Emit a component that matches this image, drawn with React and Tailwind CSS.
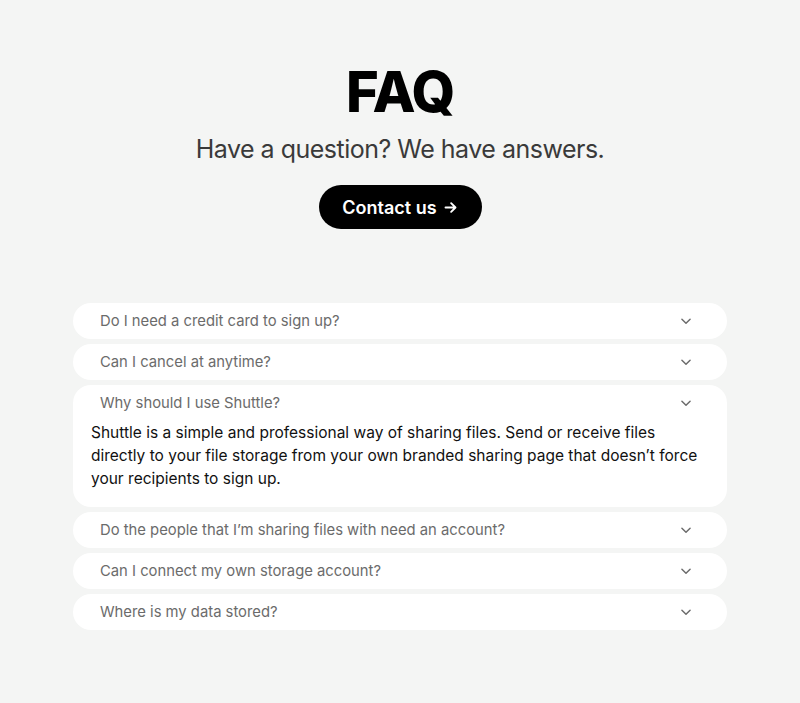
import { useState } from 'react';

const faqs = [
  { q: 'Do I need a credit card to sign up?', a: '' },
  { q: 'Can I cancel at anytime?', a: '' },
  {
    q: 'Why should I use Shuttle?',
    a: 'Shuttle is a simple and professional way of sharing files. Send or receive files directly to your file storage from your own branded sharing page that doesn\u2019t force your recipients to sign up.',
  },
  { q: 'Do the people that I\u2019m sharing files with need an account?', a: '' },
  { q: 'Can I connect my own storage account?', a: '' },
  { q: 'Where is my data stored?', a: '' },
];

function Chevron() {
  return (
    <svg width="14" height="14" viewBox="0 0 24 24" fill="none" stroke="#6b6b6b" strokeWidth="2.5" strokeLinecap="round" strokeLinejoin="round">
      <path d="M5 9l7 7 7-7" />
    </svg>
  );
}

export default function App() {
  const [open, setOpen] = useState(2);

  return (
    <div className="min-h-[703px] bg-[#f4f5f4] font-['Inter',sans-serif] pt-[61px]">
      {/* Header */}
      <div className="flex flex-col items-center">
        <h1 className="text-[56px] leading-[62px] font-extrabold tracking-tight text-black">FAQ</h1>
        <p className="mt-[10px] text-[25px] leading-[32px] tracking-[-0.02em] text-[#3a3a3a]">
          Have a question? We have answers.
        </p>
        <button className="mt-[20px] h-[44px] w-[163px] rounded-full bg-black text-white text-[18px] font-semibold flex items-center justify-center gap-1.5">
          Contact us
          <svg width="15" height="15" viewBox="0 0 24 24" fill="none" stroke="white" strokeWidth="3" strokeLinecap="round" strokeLinejoin="round">
            <path d="M4 12h15M13 5l7 7-7 7" />
          </svg>
        </button>
      </div>

      {/* Accordion */}
      <div className="mx-auto mt-[74px] w-[654px] flex flex-col gap-[5px]">
        {faqs.map((item, i) => (
          <div key={i} className="bg-white rounded-[18px]">
            <button
              onClick={() => setOpen(open === i ? -1 : i)}
              className="w-full h-[36px] flex items-center justify-between pl-[27px] pr-[34px] text-left"
            >
              <span className="text-[14.8px] text-[#6b6b6b]">{item.q}</span>
              <Chevron />
            </button>
            {open === i && item.a && (
              <p className="px-[18px] pb-[17px] text-[15.5px] leading-[23px] text-[#111]">{item.a}</p>
            )}
          </div>
        ))}
      </div>
    </div>
  );
}
